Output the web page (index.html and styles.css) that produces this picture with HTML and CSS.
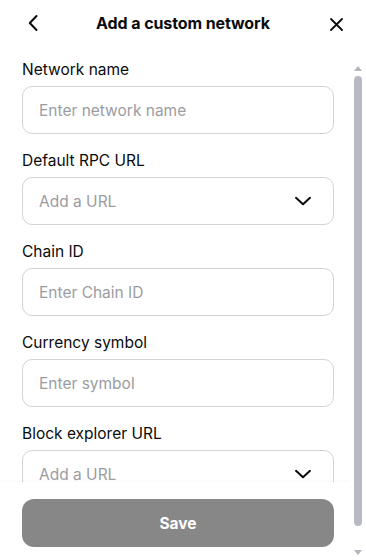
FILE: index.html
```html
<!DOCTYPE html>
<html lang="en">
<head>
<meta charset="utf-8">
<title>Add a custom network</title>
<link rel="stylesheet" href="styles.css">
</head>
<body>
<div class="screen">
  <header class="header">
    <button class="icon-btn back" aria-label="Back">
      <svg width="12" height="18" viewBox="0 0 12 18"><path d="M9.5 2 L2.8 9 L9.5 16" fill="none" stroke="#0a0b0d" stroke-width="2" stroke-linecap="round" stroke-linejoin="round"/></svg>
    </button>
    <h1 class="title">Add a custom network</h1>
    <button class="icon-btn close" aria-label="Close">
      <svg width="13" height="13" viewBox="0 0 13 13"><path d="M1 1 L12 12 M12 1 L1 12" fill="none" stroke="#0a0b0d" stroke-width="1.8" stroke-linecap="round"/></svg>
    </button>
  </header>
  <div class="body">
    <main class="scroller">
      <form class="form">
        <div class="field">
          <label class="label">Network name</label>
          <div class="input"><span class="placeholder">Enter network name</span></div>
        </div>
        <div class="field">
          <label class="label">Default RPC URL</label>
          <div class="input select"><span class="placeholder">Add a URL</span>
            <svg class="chev" width="18" height="10" viewBox="0 0 18 10"><path d="M2 1.8 L9 8.2 L16 1.8" fill="none" stroke="#0a0b0d" stroke-width="2" stroke-linecap="round" stroke-linejoin="round"/></svg>
          </div>
        </div>
        <div class="field">
          <label class="label">Chain ID</label>
          <div class="input"><span class="placeholder">Enter Chain ID</span></div>
        </div>
        <div class="field">
          <label class="label">Currency symbol</label>
          <div class="input"><span class="placeholder">Enter symbol</span></div>
        </div>
        <div class="field">
          <label class="label">Block explorer URL</label>
          <div class="input select"><span class="placeholder">Add a URL</span>
            <svg class="chev" width="18" height="10" viewBox="0 0 18 10"><path d="M2 1.8 L9 8.2 L16 1.8" fill="none" stroke="#0a0b0d" stroke-width="2" stroke-linecap="round" stroke-linejoin="round"/></svg>
          </div>
        </div>
      </form>
      <footer class="footer">
        <button class="save" type="button">Save</button>
      </footer>
    </main>
    <div class="scrollbar" aria-hidden="true">
      <div class="sb-btn up"></div>
      <div class="sb-track"><div class="sb-thumb"></div></div>
      <div class="sb-btn down"></div>
    </div>
  </div>
</div>
</body>
</html>
```
FILE: styles.css
```css
* { box-sizing: border-box; }
html, body { margin: 0; padding: 0; background: #ffffff; }
body {
  font-family: Inter, "Noto Sans", "Liberation Sans", sans-serif;
  color: #0a0b0d;
  width: 366px;
  height: 560px;
  overflow: hidden;
}
.screen {
  display: flex;
  flex-direction: column;
  height: 560px;
}
.header {
  height: 60px;
  flex: none;
  display: grid;
  grid-template-columns: 60px 1fr 60px;
  align-items: start;
  padding-top: 10px;
}
.icon-btn {
  border: 0;
  background: none;
  padding: 0;
  height: 26px;
  display: flex;
  align-items: center;
  cursor: pointer;
}
.back { justify-content: flex-start; padding-left: 27px; }
.close { justify-content: flex-end; padding-right: 23px; height: 28px; }
.title {
  margin: 0;
  text-align: center;
  font-size: 16px;
  font-weight: 700;
  line-height: 26px;
  letter-spacing: -0.1px;
}
.body {
  flex: 1;
  min-height: 0;
  display: flex;
}
.scroller {
  flex: 1;
  min-width: 0;
  overflow: hidden;
  display: flex;
  flex-direction: column;
}
.form {
  flex: none;
  display: flex;
  flex-direction: column;
  gap: 17px;
  padding: 0 16px 10px 22px;
}
.field {
  display: flex;
  flex-direction: column;
  gap: 6px;
}
.label {
  font-size: 15.5px;
  line-height: 20px;
  font-weight: 400;
  color: #0a0b0d;
}
.input {
  height: 48px;
  border: 1px solid #d3d4d9;
  border-radius: 10px;
  display: flex;
  align-items: center;
  padding: 0 21px 0 16px;
}
.placeholder {
  font-size: 15.5px;
  color: #9b9ca2;
  flex: 1;
}
.chev { flex: none; }
.footer {
  position: sticky;
  bottom: 0;
  flex: none;
  background: #ffffff;
  padding: 17px 16px 13px 22px;
  box-shadow: 0 -1px 2px rgba(0, 0, 0, 0.03);
}
.save {
  display: block;
  width: 100%;
  height: 48px;
  border: 0;
  border-radius: 12px;
  background: #878787;
  color: #ffffff;
  font-family: inherit;
  font-size: 15.5px;
  font-weight: 700;
}
.scrollbar {
  width: 16px;
  flex: none;
  display: flex;
  flex-direction: column;
  background: #ffffff;
}
.sb-btn {
  height: 16px;
  flex: none;
  display: flex;
  justify-content: center;
  align-items: center;
}
.sb-btn::before {
  content: "";
  width: 0;
  height: 0;
  border-left: 4px solid transparent;
  border-right: 4px solid transparent;
}
.up::before { border-bottom: 5px solid #b3b5bf; }
.down::before { border-top: 5px solid #b3b5bf; }
.sb-track {
  flex: 1;
  display: flex;
  justify-content: center;
}
.sb-thumb {
  width: 8px;
  height: 450px;
  border-radius: 4px;
  background: #b7b9c4;
}
```
